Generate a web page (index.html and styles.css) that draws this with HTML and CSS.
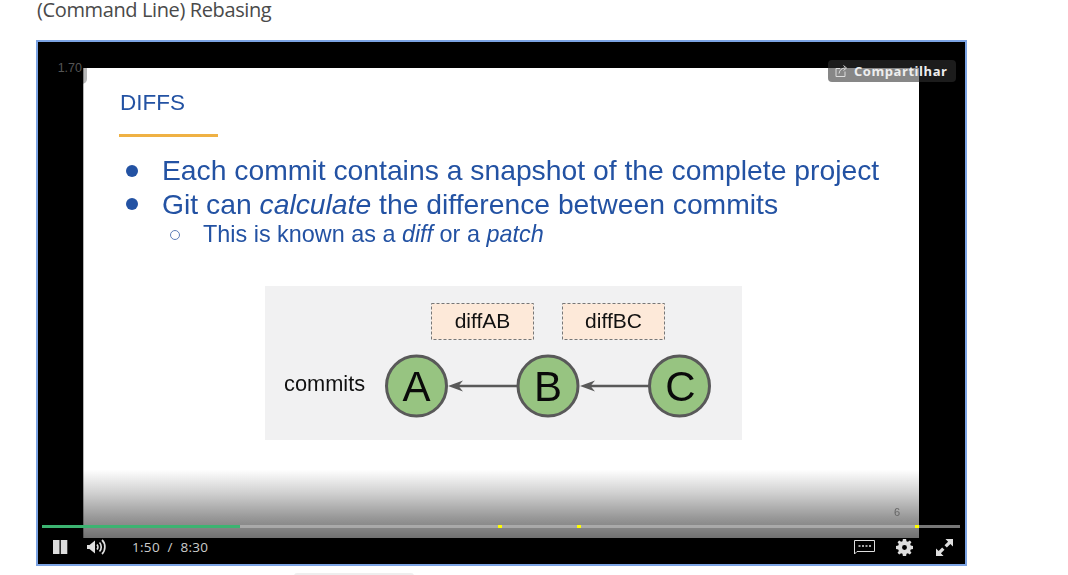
FILE: index.html
```html
<!DOCTYPE html>
<html lang="en">
<head>
    <meta charset="UTF-8">
    <meta name="viewport" content="width=device-width, initial-scale=1.0">
    <title>(Command Line) Rebasing</title>
    <link rel="stylesheet" href="styles.css">
</head>
<body>
    <div class="page">
        <h1 class="lesson-title">(Command Line) Rebasing</h1>

        <div class="player">
            <div class="slide">
                <h2 class="slide-title">DIFFS</h2>
                <div class="slide-rule"></div>
                <ul class="points">
                    <li><span>Each commit contains a snapshot of the complete project</span></li>
                    <li><span>Git can <em>calculate</em> the difference between commits</span></li>
                    <li class="sub"><span>This is known as a <em>diff</em> or a <em>patch</em></span></li>
                </ul>

                <svg class="diagram" width="477" height="154" viewBox="0 0 477 154">
                    <rect class="diff-box" x="166.5" y="17.5" width="102" height="36"/>
                    <rect class="diff-box" x="297.5" y="17.5" width="102" height="36"/>
                    <text class="diff-label" x="217.5" y="42">diffAB</text>
                    <text class="diff-label" x="348.5" y="42">diffBC</text>
                    <text class="row-label" x="19" y="104.5">commits</text>

                    <line class="edge" x1="252" y1="100" x2="190" y2="100"/>
                    <path class="edge-head" d="M183 100 L198 94.5 L193.5 100 L198 105.5 Z"/>
                    <line class="edge" x1="384" y1="100" x2="322" y2="100"/>
                    <path class="edge-head" d="M315 100 L330 94.5 L325.500 100 L330 105.500 Z"/>

                    <circle class="commit" cx="151.500" cy="100" r="30"/>
                    <circle class="commit" cx="283" cy="100" r="30"/>
                    <circle class="commit" cx="414.500" cy="100" r="30"/>
                    <text class="commit-label" x="151.500" y="115">A</text>
                    <text class="commit-label" x="283" y="115">B</text>
                    <text class="commit-label" x="415.500" y="115">C</text>
                </svg>

                <div class="slide-fade"></div>
                <span class="slide-number">6</span>
            </div>

            <div class="speed">1.70</div>

            <div class="share">
                <svg width="14" height="14" viewBox="0 0 14 14">
                    <path d="M10 7.500 V12.500 H1 V4.500 H5" fill="none" stroke="#ddd" stroke-width="1"/>
                    <path d="M4 9.500 C4.500 6 7 4 10 4 M8.500 1.500 L11.500 4 L8.500 6.500" fill="none" stroke="#ddd" stroke-width="1"/>
                </svg>
                <span>Compartilhar</span>
            </div>

            <div class="progress">
                <div class="progress-played"></div>
                <span class="cue cue-1"></span>
                <span class="cue cue-2"></span>
                <span class="cue cue-3"></span>
            </div>

            <div class="controls">
                <svg class="btn-pause" width="15" height="14" viewBox="0 0 15 14">
                    <rect x="0" y="0" width="6.500" height="14" fill="#dedede"/>
                    <rect x="7.800" y="0" width="6.500" height="14" fill="#dedede"/>
                </svg>
                <svg class="btn-volume" width="20" height="16" viewBox="0 0 20 16">
                    <path d="M0 6 H2.500 L8 1.500 V14.500 L2.500 10 H0 Z" fill="#dedede"/>
                    <path d="M10 5.500 C11.200 6.800 11.200 9.200 10 10.500 M12.500 3.500 C14.800 5.800 14.800 10.200 12.500 12.500 M15 1 C18.800 4.500 18.800 11.500 15 15" fill="none" stroke="#dedede" stroke-width="1.700"/>
                </svg>
                <div class="time">1:50&nbsp; /&nbsp; 8:30</div>
                <svg class="btn-captions" width="21" height="15" viewBox="0 0 21 15">
                    <path d="M0.500 0.500 H20.500 V11.500 H3 L0.500 14 Z" fill="none" stroke="#dedede" stroke-width="1"/>
                    <path d="M4.500 6 H17" stroke="#dedede" stroke-width="1.500" stroke-dasharray="2 1.500"/>
                </svg>
                <svg class="btn-gear" width="17" height="17" viewBox="0 0 18 18">
                    <path fill="#dedede" fill-rule="evenodd" d="M7.300 0 H10.700 L11.100 2.400 L12.600 3 L14.600 1.600 L16.400 3.400 L15 5.400 L15.600 6.900 L18 7.300 V10.700 L15.600 11.100 L15 12.600 L16.400 14.600 L14.600 16.400 L12.600 15 L11.100 15.600 L10.700 18 H7.300 L6.900 15.600 L5.400 15 L3.400 16.400 L1.600 14.600 L3 12.600 L2.400 11.100 L0 10.700 V7.300 L2.400 6.900 L3 5.400 L1.600 3.400 L3.400 1.600 L5.400 3 L6.900 2.400 Z M9 6.400 A2.600 2.600 0 1 0 9 11.600 A2.600 2.600 0 1 0 9 6.400 Z"/>
                </svg>
                <svg class="btn-expand" width="17" height="17" viewBox="0 0 18 18">
                    <path fill="#dedede" d="M10 0 H18 V8 L15.200 5.200 L11.500 9 L9 6.500 L12.800 2.800 Z M0 18 V10 L2.800 12.800 L6.500 9 L9 11.500 L5.200 15.200 L8 18 Z"/>
                </svg>
            </div>
        </div>

        <div class="next-tab"></div>
    </div>
</body>
</html>
```

FILE: styles.css
```css
html, body {
    margin: 0;
    height: 575px;
    overflow: hidden;
    background: #fff;
}
.page {
    padding-left: 36px;
    font-family: "Open Sans", sans-serif;
}
.lesson-title {
    margin: 0 0 0 1px;
    height: 40px;
    font-size: 20px;
    line-height: 20px;
    font-weight: 400;
    letter-spacing: -0.38px;
    color: #4a4a4a;
}
.player {
    position: relative;
    box-sizing: border-box;
    width: 931px;
    height: 526px;
    padding-top: 26px;
    background: #000;
    border: 2px solid #7ba3e3;
}

/* slide picture */
.slide {
    position: relative;
    box-sizing: border-box;
    width: 836px;
    height: 470px;
    margin-left: 45px;
    padding: 22px 0 0 37px;
    background: #fff;
    box-shadow: inset 1px 0 0 #b5b5b5;
    color: #2352a3;
    font-family: "Liberation Sans", Arial, sans-serif;
    filter: blur(0.45px);
}
.slide-title {
    margin: 0;
    font-size: 22.500px;
    line-height: 26px;
    font-weight: 400;
}
.slide-rule {
    width: 99px;
    height: 3px;
    margin: 18px 0 0 -1px;
    background: #efb144;
}
.points {
    margin: 17px 0 0;
    padding: 0;
    list-style: none;
    font-size: 28.300px;
    line-height: 33.500px;
}
.points li {
    display: flex;
    align-items: center;
}
.points li::before {
    content: "";
    flex: none;
    width: 12px;
    height: 12px;
    margin: 0 24px 0 6px;
    border-radius: 50%;
    background: #2352a3;
}
.points li.sub {
    font-size: 23.400px;
    line-height: 27px;
}
.points li.sub::before {
    box-sizing: border-box;
    width: 10px;
    height: 10px;
    margin: 0 23px 0 50px;
    background: none;
    border: 1px solid #5f7fb8;
}
.diagram {
    display: block;
    margin: 38px 0 0 145px;
    background: #f1f1f2;
}
.diff-box {
    fill: #fde9d9;
    stroke: #777;
    stroke-width: 1;
    stroke-dasharray: 3 2;
}
.diff-label {
    font-size: 21px;
    fill: #111;
    text-anchor: middle;
}
.row-label {
    font-size: 21.800px;
    fill: #111;
}
.edge {
    stroke: #595959;
    stroke-width: 2.500;
}
.edge-head {
    fill: #595959;
}
.commit {
    fill: #97c481;
    stroke: #595959;
    stroke-width: 3;
}
.commit-label {
    font-size: 42px;
    fill: #0a0a0a;
    text-anchor: middle;
}
.slide-fade {
    position: absolute;
    left: 0;
    right: 0;
    bottom: 0;
    height: 72px;
    background: linear-gradient(to bottom, rgba(0,0,0,0) 5%, rgba(0,0,0,0.18) 37%, rgba(0,0,0,0.4) 71%, rgba(0,0,0,0.56));
}
.slide-number {
    position: absolute;
    right: 19px;
    top: 437px;
    font-size: 11px;
    line-height: 14px;
    color: #666;
}

/* things on top of the video */
.speed {
    position: absolute;
    left: 14px;
    top: 16px;
    width: 35px;
    height: 26px;
    padding-right: 5px;
    box-sizing: border-box;
    border-radius: 0 0 5px 0;
    background: rgba(0,0,0,0.28);
    color: #555;
    font: 12.500px/21px "Liberation Sans", Arial, sans-serif;
    text-align: right;
}
.share {
    position: absolute;
    left: 790px;
    top: 18px;
    display: flex;
    align-items: center;
    gap: 5px;
    height: 22px;
    padding: 0 8px 0 7px;
    border-radius: 4px;
    background: rgba(48,48,48,0.58);
    color: #eee;
    font-size: 13px;
    font-weight: 700;
    letter-spacing: 0.55px;
}
.progress {
    position: absolute;
    left: 4px;
    top: 483px;
    width: 918px;
    height: 3px;
    background: rgba(190,190,190,0.62);
}
.progress-played {
    width: 198px;
    height: 3px;
    background: #3cb371;
}
.cue {
    position: absolute;
    top: 0;
    width: 4px;
    height: 3px;
    background: #ff0;
}
.cue-1 { left: 456px; }
.cue-2 { left: 535px; }
.cue-3 { left: 873px; }
.controls {
    display: flex;
    align-items: center;
    height: 18px;
    padding-left: 15px;
}
.btn-volume {
    margin-left: 19px;
}
.time {
    margin-left: 25px;
    font-size: 13.500px;
    letter-spacing: 0.3px;
    color: #ccc;
}
.btn-captions {
    margin-left: auto;
}
.btn-gear {
    margin-left: 21px;
}
.btn-expand {
    margin: 0 12px 0 23px;
}
.next-tab {
    width: 120px;
    height: 6px;
    margin: 7px 0 0 258px;
    border-radius: 3px 3px 0 0;
    background: #eee;
}
```
